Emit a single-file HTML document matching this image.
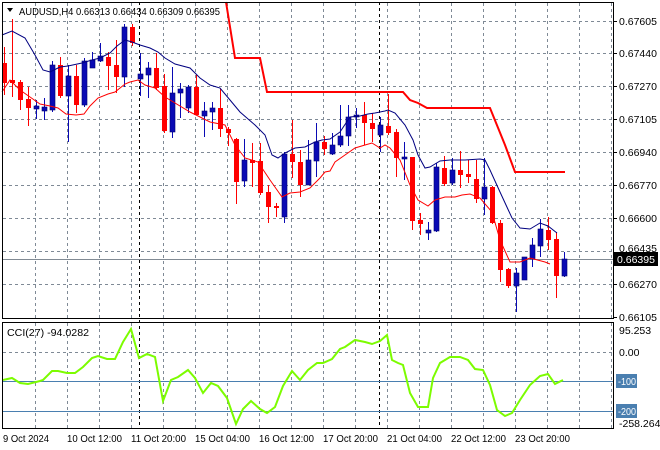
<!DOCTYPE html>
<html><head><meta charset="utf-8"><style>
html,body{margin:0;padding:0;background:#fff;width:660px;height:450px;overflow:hidden}
svg{display:block;font-family:"Liberation Sans",sans-serif}
</style></head><body>
<svg id="s" width="660" height="450" xmlns="http://www.w3.org/2000/svg">
<rect width="660" height="450" fill="#fff"/>
<g id="grid" stroke="#7f8a96" stroke-width="1" stroke-dasharray="3,3"></g>
<line x1="139.5" y1="2" x2="139.5" y2="428" stroke="#000" stroke-dasharray="3,3"/>
<line x1="379.5" y1="2" x2="379.5" y2="428" stroke="#000" stroke-dasharray="3,3"/>
<line x1="2" y1="259.5" x2="613" y2="259.5" stroke="#808a94"/>
<line x1="2" y1="381.5" x2="613" y2="381.5" stroke="#4a7fb0"/>
<line x1="2" y1="411.5" x2="613" y2="411.5" stroke="#4a7fb0"/>
<g id="c"></g>
<polyline fill="none" stroke="#000080" stroke-width="1" points="2,35 12,31 25,38 35,55 43,70 50,72 60,67 68,66 82,63 92,60 100,58 110,53 117,46 125,40 132,42 140,45 150,48 158,52 165,58 175,64 190,68 200,78 210,85 220,88 230,100 240,112 255,125 265,135 272,155 278,158 285,153 295,148 305,147 315,142 322,140 330,139 340,132 350,117 360,116 368,114 375,113 385,111 388,110 395,113 405,125 413,140 418,155 425,168 430,167 440,161 450,160 465,160 480,159 485,160 490,170 500,192 512,218 520,228 530,229 540,223 548,226 557,233"/>
<polyline fill="none" stroke="#ff0000" stroke-width="1" points="2,92 10,80 20,90 30,97 40,104 50,106 58,108 66,114 76,115 84,114 90,106 98,98 108,94 115,92 125,84 130,82 138,80 145,85 155,88 165,97 175,103 190,112 210,122 225,125 235,145 245,158 258,162 270,180 282,197 290,193 300,192 310,188 320,178 325,172 330,171 335,162 345,155 355,148 365,145 372,143 380,148 385,145 390,148 400,160 410,185 418,200 428,206 435,200 445,197 455,197 462,195 470,194 480,198 492,212 500,240 510,262 520,262 530,258 545,262 550,264"/>
<polyline fill="none" stroke="#ff0000" stroke-width="2" points="226,2 235,58 260,58 267,92 403,92 410,100 418,103 427,108 490,108 505,145 515,172 565,172"/>
<polyline fill="none" stroke="#7cfc00" stroke-width="2" points="3,380 12,378 20,383 28,384 40,381 43,380 52,371 58,371 67,373 75,373 83,367 92,358 98,356 107,359 115,359 123,342 131,329 139,358 147,354 155,357 163,401 171,380 178,377 188,370 195,378 203,393 211,383 218,386 227,398 236,424 243,409 251,401 260,409 267,413 275,407 283,386 292,371 300,380 308,370 317,363 323,363 332,359 340,349 345,347 355,340 365,342 372,344 380,341 387,335 392,360 398,363 403,365 410,393 418,407 428,407 433,378 440,363 450,357 460,357 468,360 475,369 483,370 490,385 497,410 505,416 512,413 520,400 530,385 540,376 548,374 555,384 563,380"/>
<rect x="2.5" y="2.5" width="611" height="316" fill="none" stroke="#000"/>
<rect x="2.5" y="322.5" width="611" height="106" fill="none" stroke="#000"/>
<g font-size="10.5" fill="#000">
<path d="M7,8 L13,8 L10,12 Z" fill="#000"/>
<text x="19" y="15" textLength="201" lengthAdjust="spacingAndGlyphs">AUDUSD,H4  0.66313 0.66434 0.66309 0.66395</text>
<text x="7" y="336" textLength="82" lengthAdjust="spacingAndGlyphs">CCI(27) -94.0282</text>
<g id="py"></g>
<rect x="614" y="252" width="44" height="14" fill="#000"/>
<text x="617" y="263" fill="#fff">0.66395</text>
<text x="619" y="334">95.253</text>
<text x="619" y="356">0.00</text>
<rect x="616" y="374" width="21" height="14" fill="#4a7fb0"/>
<text x="618" y="385" fill="#fff" font-size="10" textLength="18" lengthAdjust="spacingAndGlyphs">-100</text>
<rect x="616" y="404" width="21" height="14" fill="#4a7fb0"/>
<text x="618" y="415" fill="#fff" font-size="10" textLength="18" lengthAdjust="spacingAndGlyphs">-200</text>
<text x="619" y="427">-258.264</text>
<g font-size="10">
<text x="3" y="442" textLength="46" lengthAdjust="spacingAndGlyphs">9 Oct 2024</text>
<text x="67" y="442" textLength="55" lengthAdjust="spacingAndGlyphs">10 Oct 12:00</text>
<text x="131" y="442" textLength="55" lengthAdjust="spacingAndGlyphs">11 Oct 20:00</text>
<text x="195" y="442" textLength="55" lengthAdjust="spacingAndGlyphs">15 Oct 04:00</text>
<text x="259" y="442" textLength="55" lengthAdjust="spacingAndGlyphs">16 Oct 12:00</text>
<text x="323" y="442" textLength="55" lengthAdjust="spacingAndGlyphs">17 Oct 20:00</text>
<text x="387" y="442" textLength="55" lengthAdjust="spacingAndGlyphs">21 Oct 04:00</text>
<text x="451" y="442" textLength="55" lengthAdjust="spacingAndGlyphs">22 Oct 12:00</text>
<text x="515" y="442" textLength="55" lengthAdjust="spacingAndGlyphs">23 Oct 20:00</text>
</g>
</g>
</svg>
<script>
var NS="http://www.w3.org/2000/svg";
function el(p,t,a){var e=document.createElementNS(NS,t);for(var k in a)e.setAttribute(k,a[k]);p.appendChild(e);return e;}
var g=document.getElementById('grid');
for(var x=35;x<613;x+=32){el(g,'line',{x1:x+.5,y1:3,x2:x+.5,y2:318});el(g,'line',{x1:x+.5,y1:323,x2:x+.5,y2:428});}
var ys=[21,53,86,119,152,185,218,251,284];
ys.forEach(function(y){el(g,'line',{x1:3,y1:y+.5,x2:613,y2:y+.5});});
el(g,'line',{x1:3,y1:352.5,x2:613,y2:352.5});
var py=document.getElementById('py');
var pl=['0.67605','0.67440','0.67270','0.67105','0.66940','0.66770','0.66600','0.66435','0.66270','0.66105'];
var pyy=[21,53,86,119,152,185,218,251,284,317];
pl.forEach(function(t,i){if(i==7){var e=el(py,'text',{x:619,y:pyy[i]+1});e.textContent=t;return;}var e=el(py,'text',{x:619,y:pyy[i]+4});e.textContent=t;el(py,'line',{x1:613,y1:pyy[i]+.5,x2:617,y2:pyy[i]+.5,stroke:'#000'});});
var D=[[63,83,47,95,'r'],[80,83,19,97,'r'],[82,100,80,110,'r'],[99,108,87,126,'r'],[106,109,100,119,'b'],[107,111,98,120,'b'],[65,110,61,112,'b'],[65,96,57,98,'r'],[76,96,65,142,'b'],[76,105,65,113,'r'],[61,105,58,107,'b'],[60,68,52,68,'b'],[56,61,43,62,'b'],[57,66,52,90,'r'],[65,77,40,93,'r'],[27,77,24,87,'b'],[27,43,24,46,'r'],[74,79,53,96,'b'],[68,75,62,98,'b'],[68,88,53,90,'r'],[86,131,74,133,'r'],[93,132,67,138,'b'],[89,93,83,118,'b'],[87,108,85,113,'b'],[87,115,75,115,'r'],[111,116,102,137,'b'],[108,112,102,130,'b'],[108,129,89,137,'r'],[129,133,127,146,'r'],[139,182,138,204,'r'],[160,181,139,187,'b'],[160,163,143,187,'r'],[161,193,143,195,'r'],[192,207,185,223,'r'],[206,208,203,217,'r'],[154,217,152,223,'b'],[154,162,120,178,'r'],[162,185,150,197,'r'],[160,185,140,185,'b'],[142,161,123,177,'b'],[142,149,136,155,'r'],[145,154,133,155,'b'],[136,145,105,147,'b'],[117,136,105,146,'b'],[115,117,108,128,'b'],[115,123,102,145,'r'],[123,129,113,142,'r'],[125,135,117,152,'b'],[126,133,94,135,'r'],[132,158,129,177,'r'],[157,159,142,180,'b'],[157,221,157,230,'r'],[220,224,213,235,'r'],[230,233,222,240,'b'],[167,231,163,232,'b'],[168,184,156,186,'r'],[170,183,158,185,'b'],[170,175,151,188,'r'],[174,177,160,183,'r'],[179,199,160,203,'r'],[187,199,158,215,'b'],[187,223,186,224,'r'],[223,270,220,282,'r'],[269,286,268,288,'r'],[273,286,268,312,'b'],[257,280,257,280,'b'],[245,259,238,267,'b'],[229,246,219,257,'b'],[230,240,217,250,'r'],[239,276,232,298,'r'],[259,276,252,277,'b']];
var c=document.getElementById('c');
D.forEach(function(d,k){var x=4+8*k;var col=d[4]=='r'?'#ff0000':'#0a0ab4';
el(c,'line',{x1:x+.5,y1:d[2],x2:x+.5,y2:d[3],stroke:col,'stroke-width':1});
var h=Math.max(d[1]-d[0],2);
el(c,'rect',{x:x-2,y:d[0],width:5,height:h,fill:col,stroke:d[4]=='r'?'#ff0000':'#000070','stroke-width':d[4]=='r'?0:0.6});});
</script>
</body></html>
